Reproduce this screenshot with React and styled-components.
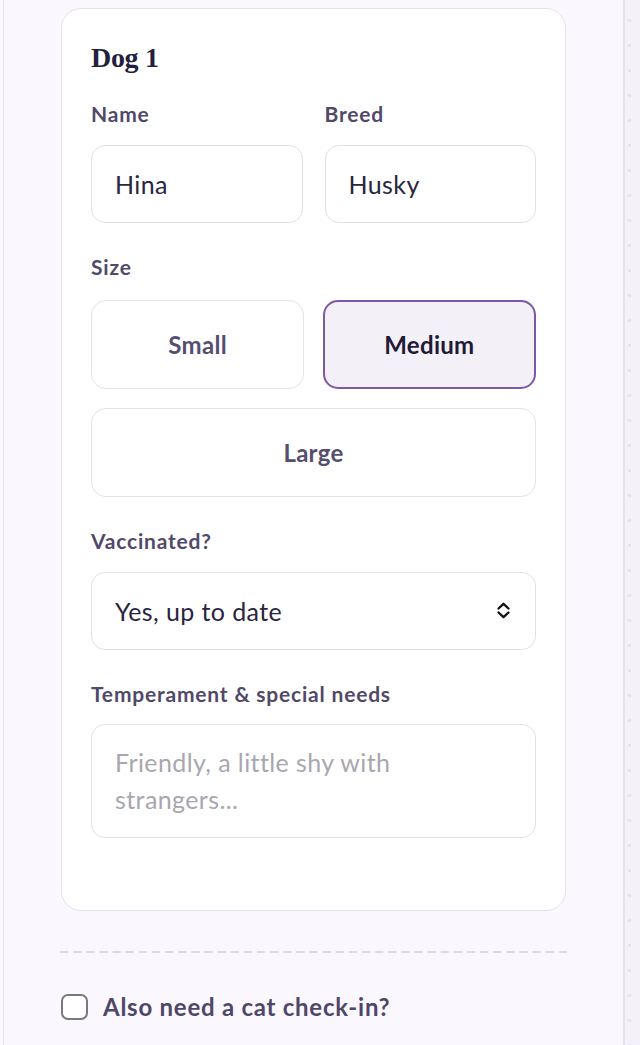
import React, { useState } from 'react'
import styled, { createGlobalStyle } from 'styled-components'

const GlobalStyle = createGlobalStyle`
    * { box-sizing: border-box; }
    body {
        margin: 0;
        background: #faf8fe;
        font-family: Lato, "Open Sans", sans-serif;
    }
`;

const sizes = ['Small', 'Medium', 'Large']

const App = () => {
    const [size, setSize] = useState('Medium')
    const [catCheckIn, setCatCheckIn] = useState(false)

    return (
        <Frame>
            <GlobalStyle />
            <Main>
                <Column>
                    <Card>
                        <CardTitle>Dog 1</CardTitle>
                        <Fields>
                            <Row>
                                <Field>
                                    <FieldLabel>Name</FieldLabel>
                                    <TextInput type='text' defaultValue='Hina' />
                                </Field>
                                <Field>
                                    <FieldLabel>Breed</FieldLabel>
                                    <TextInput type='text' defaultValue='Husky' />
                                </Field>
                            </Row>

                            <Field>
                                <FieldLabel>Size</FieldLabel>
                                <SizeGrid>
                                    {sizes.map(s => (
                                        <SizeOption
                                            key={s}
                                            type='button'
                                            $active={size === s}
                                            $wide={s === 'Large'}
                                            onClick={() => setSize(s)}
                                        >
                                            {s}
                                        </SizeOption>
                                    ))}
                                </SizeGrid>
                            </Field>

                            <Field>
                                <FieldLabel>Vaccinated?</FieldLabel>
                                <SelectBox>
                                    <Select defaultValue='yes'>
                                        <option value='yes'>Yes, up to date</option>
                                        <option value='no'>No</option>
                                        <option value='unsure'>Not sure</option>
                                    </Select>
                                    <svg width='15' height='17' viewBox='0 0 15 17' fill='none'>
                                        <path d='M2.5 6.5 L7.5 1.8 L12.5 6.5' stroke='#111' strokeWidth='2.3' strokeLinecap='round' strokeLinejoin='round' />
                                        <path d='M2.5 10.5 L7.5 15.2 L12.5 10.5' stroke='#111' strokeWidth='2.3' strokeLinecap='round' strokeLinejoin='round' />
                                    </svg>
                                </SelectBox>
                            </Field>

                            <Field>
                                <FieldLabel>Temperament &amp; special needs</FieldLabel>
                                <TextArea rows={2} placeholder='Friendly, a little shy with strangers...' />
                            </Field>
                        </Fields>
                    </Card>

                    <Divider />

                    <CheckRow onClick={() => setCatCheckIn(!catCheckIn)}>
                        <CheckBox $checked={catCheckIn} />
                        <CheckLabel>Also need a cat check-in?</CheckLabel>
                    </CheckRow>
                </Column>
            </Main>
            <SideStrip />
        </Frame>
    )
}

export default App


const Frame = styled.div`
    display: flex;
    min-height: 100vh;
    padding-left: 3px;
    background: #faf8fe;
`;

const Main = styled.div`
    flex: 1;
    display: flex;
    justify-content: center;
    padding-top: 8px;
    border-left: 1.5px solid #e7e4ee;
    border-right: 2px solid #e6e3ed;
`;

const SideStrip = styled.div`
    width: 15px;
    background-color: #f4f2f8;
    background-image: radial-gradient(circle, #e4e1ea 1.2px, transparent 1.8px);
    background-size: 15px 25px;
    background-position: -3px 8px;
`;

const Column = styled.div`
    width: 505px;
    display: flex;
    flex-direction: column;
`;

const Card = styled.div`
    display: flex;
    flex-direction: column;
    background: #fff;
    border: 1.5px solid #e4e2ea;
    border-radius: 20px;
    padding: 32px 29px 71.5px;
`;

const CardTitle = styled.h2`
    margin: 0 0 26px;
    font-family: "Liberation Serif", "DejaVu Serif", serif;
    font-size: 28px;
    line-height: 34px;
    font-weight: 700;
    letter-spacing: -0.3px;
    color: #231f3e;
`;

const Fields = styled.div`
    display: flex;
    flex-direction: column;
    gap: 31px;
`;

const Row = styled.div`
    display: grid;
    grid-template-columns: 1fr 1fr;
    gap: 22px;
`;

const Field = styled.div`
    display: flex;
    flex-direction: column;
    gap: 17.5px;
    min-width: 0;
`;

const FieldLabel = styled.label`
    font-size: 21px;
    line-height: 26px;
    font-weight: 700;
    letter-spacing: 0.8px;
    color: #514969;
`;

const TextInput = styled.input`
    width: 100%;
    height: 78px;
    padding: 0 23px;
    border: 1.5px solid #e2e0e9;
    border-radius: 14px;
    background: #fff;
    font-family: inherit;
    font-size: 25px;
    letter-spacing: 0.4px;
    color: #2a2540;
    outline: none;
`;

const SizeGrid = styled.div`
    display: grid;
    grid-template-columns: 1fr 1fr;
    column-gap: 18.5px;
    row-gap: 19.5px;
    margin-top: 2.5px;
`;

const SizeOption = styled.button`
    grid-column: ${p => p.$wide ? '1 / -1' : 'auto'};
    height: 89px;
    border-radius: 15px;
    border: ${p => p.$active ? '2px solid #7d57a9' : '1.5px solid #e3e1ea'};
    background: ${p => p.$active ? '#f3f0f8' : '#fff'};
    color: ${p => p.$active ? '#1f1a36' : '#564e71'};
    font-family: inherit;
    font-size: 24px;
    font-weight: 700;
    letter-spacing: 0.3px;
    cursor: pointer;
`;

const SelectBox = styled.div`
    display: flex;
    align-items: center;
    height: 78px;
    padding: 0 24px 0 23px;
    border: 1.5px solid #e2e0e9;
    border-radius: 14px;
    background: #fff;
`;

const Select = styled.select`
    flex: 1;
    appearance: none;
    border: none;
    outline: none;
    background: transparent;
    padding: 0;
    font-family: inherit;
    font-size: 25px;
    letter-spacing: 0.4px;
    color: #2a2540;
`;

const TextArea = styled.textarea`
    width: 100%;
    padding: 18.5px 40px 18.5px 23px;
    border: 1.5px solid #e2e0e9;
    border-radius: 14px;
    background: #fff;
    font-family: inherit;
    font-size: 25px;
    line-height: 37.5px;
    letter-spacing: 0.4px;
    color: #2a2540;
    resize: none;
    outline: none;

    &::placeholder {
        color: #a9a6b0;
    }
`;

const Divider = styled.div`
    height: 2px;
    margin: 40px -1px 0;
    background-image: linear-gradient(to right, #dcd9e4 8px, transparent 8px);
    background-size: 13.13px 2px;
    background-repeat: repeat-x;
`;

const CheckRow = styled.label`
    display: flex;
    align-items: center;
    gap: 15px;
    margin-top: 39px;
    cursor: pointer;
`;

const CheckBox = styled.span`
    width: 27px;
    height: 26px;
    border: 2.5px solid #7a7781;
    border-radius: 7px;
    background: ${p => p.$checked ? '#7d57a9' : '#fff'};
`;

const CheckLabel = styled.span`
    font-size: 24px;
    line-height: 30px;
    font-weight: 700;
    letter-spacing: 0.75px;
    color: #4f4768;
`;
